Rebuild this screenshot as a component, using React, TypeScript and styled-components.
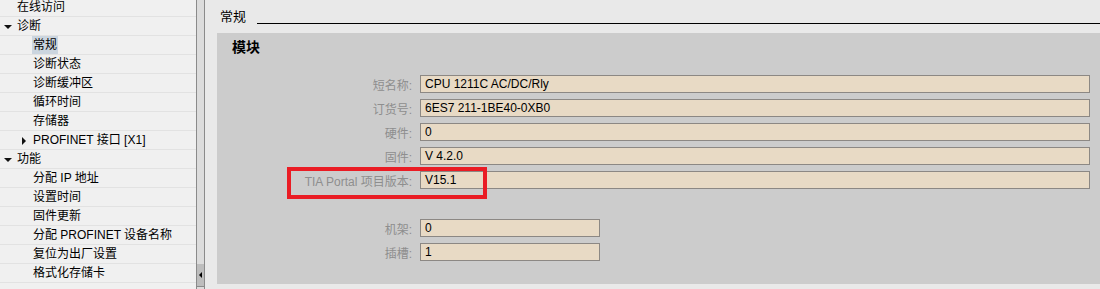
import React, { FC } from 'react';
import styled, { createGlobalStyle } from 'styled-components';

const GlobalStyle = createGlobalStyle`
  html, body {
    margin: 0;
    padding: 0;
    background: #e9e9e9;
  }
  body {
    font-family: "Liberation Sans", "Noto Sans CJK SC", sans-serif;
    font-size: 12px;
    color: #000;
  }
`;

type TreeItem = {
  label: string;
  level: number;
  arrow?: 'open' | 'closed';
  selected?: boolean;
};

const treeItems: TreeItem[] = [
  { label: '在线访问', level: 0 },
  { label: '诊断', level: 0, arrow: 'open' },
  { label: '常规', level: 1, selected: true },
  { label: '诊断状态', level: 1 },
  { label: '诊断缓冲区', level: 1 },
  { label: '循环时间', level: 1 },
  { label: '存储器', level: 1 },
  { label: 'PROFINET 接口 [X1]', level: 1, arrow: 'closed' },
  { label: '功能', level: 0, arrow: 'open' },
  { label: '分配 IP 地址', level: 1 },
  { label: '设置时间', level: 1 },
  { label: '固件更新', level: 1 },
  { label: '分配 PROFINET 设备名称', level: 1 },
  { label: '复位为出厂设置', level: 1 },
  { label: '格式化存储卡', level: 1 },
];

const mainFields = [
  { label: '短名称:', value: 'CPU 1211C AC/DC/Rly' },
  { label: '订货号:', value: '6ES7 211-1BE40-0XB0' },
  { label: '硬件:', value: '0' },
  { label: '固件:', value: 'V 4.2.0' },
  { label: 'TIA Portal 项目版本:', value: 'V15.1', marked: true },
];

const slotFields = [
  { label: '机架:', value: '0' },
  { label: '插槽:', value: '1' },
];

const App: FC = () => {
  return (
    <>
      <GlobalStyle />
      <Screen>
        <Tree>
          {treeItems.map(item => (
            <TreeRow key={item.label} level={item.level}>
              <ArrowSlot>
                {item.arrow === 'open' && <ArrowDown />}
                {item.arrow === 'closed' && <ArrowRight />}
              </ArrowSlot>
              <TreeLabel selected={item.selected}>{item.label}</TreeLabel>
            </TreeRow>
          ))}
        </Tree>
        <Splitter>
          <SplitterThumb>
            <ThumbArrow />
          </SplitterThumb>
        </Splitter>
        <Content>
          <SectionHeader>
            <SectionTitle>常规</SectionTitle>
            <SectionRule />
          </SectionHeader>
          <Panel>
            <PanelTitle>模块</PanelTitle>
            <FieldGroup>
              {mainFields.map(f => (
                <FieldRow key={f.label}>
                  <FieldLabel>{f.label}</FieldLabel>
                  <FieldInput>{f.value}</FieldInput>
                  {f.marked && <Marker />}
                </FieldRow>
              ))}
            </FieldGroup>
            <FieldGroup spaced>
              {slotFields.map(f => (
                <FieldRow key={f.label} short>
                  <FieldLabel>{f.label}</FieldLabel>
                  <FieldInput>{f.value}</FieldInput>
                </FieldRow>
              ))}
            </FieldGroup>
          </Panel>
        </Content>
      </Screen>
    </>
  );
};

export default App;

const Screen = styled.div`
  display: flex;
  width: 1100px;
  height: 289px;
  overflow: hidden;
`;

const Tree = styled.div`
  width: 196px;
  flex-shrink: 0;
  background: #f0f0f0;
  margin-top: -2px;
`;

const TreeRow = styled.div<{ level: number }>`
  display: flex;
  align-items: center;
  height: 18px;
  border-bottom: 1px solid #e2e2e2;
  padding-left: ${p => (p.level === 0 ? 2 : 18)}px;
`;

const ArrowSlot = styled.div`
  width: 12px;
  height: 18px;
  margin-right: 2px;
  display: flex;
  align-items: center;
  justify-content: center;
`;

const ArrowDown = styled.div`
  width: 0;
  height: 0;
  margin-top: 1px;
  border-left: 4px solid transparent;
  border-right: 4px solid transparent;
  border-top: 4px solid #111;
`;

const ArrowRight = styled.div`
  width: 0;
  height: 0;
  margin-top: 1px;
  border-top: 4px solid transparent;
  border-bottom: 4px solid transparent;
  border-left: 4px solid #111;
`;

const TreeLabel = styled.span<{ selected?: boolean }>`
  line-height: 17px;
  padding: 1px 1px 0;
  white-space: nowrap;
  background: ${p => (p.selected ? '#cbd5df' : 'transparent')};
`;

const Splitter = styled.div`
  width: 7px;
  flex-shrink: 0;
  background: #dcdcdc;
  border-left: 1px solid #8a8a8a;
  border-right: 1px solid #8a8a8a;
  display: flex;
  flex-direction: column;
  justify-content: flex-end;
  padding-bottom: 2px;
`;

const SplitterThumb = styled.div`
  height: 22px;
  background: #bdbdbd;
  border-bottom: 1px solid #8a8a8a;
  display: flex;
  align-items: center;
  padding-left: 2px;
`;

const ThumbArrow = styled.div`
  width: 0;
  height: 0;
  border-top: 3px solid transparent;
  border-bottom: 3px solid transparent;
  border-right: 3px solid #000;
`;

const Content = styled.div`
  flex: 1;
  background: #e9e9e9;
  display: flex;
  flex-direction: column;
`;

const SectionHeader = styled.div`
  display: flex;
  align-items: flex-start;
  height: 24px;
  padding-top: 9px;
  padding-left: 15px;
`;

const SectionTitle = styled.span`
  font-size: 13px;
  line-height: 16px;
`;

const SectionRule = styled.div`
  flex: 1;
  height: 1px;
  background: #000;
  margin-top: 14px;
  margin-left: 11px;
`;

const Panel = styled.div`
  margin-left: 12px;
  height: 251px;
  background: #cccccc;
  padding-top: 5px;
  box-sizing: border-box;
`;

const PanelTitle = styled.div`
  font-size: 14px;
  font-weight: bold;
  line-height: 18px;
  padding-left: 15px;
  margin-bottom: 19px;
`;

const FieldGroup = styled.div<{ spaced?: boolean }>`
  display: flex;
  flex-direction: column;
  gap: 6px;
  margin-top: ${p => (p.spaced ? 30 : 0)}px;
`;

const FieldRow = styled.div<{ short?: boolean }>`
  position: relative;
  display: grid;
  grid-template-columns: 195px ${p => (p.short ? '180px' : '1fr')};
  column-gap: 8px;
  padding-right: 10px;
  align-items: center;
`;

const FieldLabel = styled.span`
  text-align: right;
  color: #8e8e8e;
  white-space: nowrap;
`;

const FieldInput = styled.div`
  height: 18px;
  box-sizing: border-box;
  border: 1px solid #8c8884;
  background: #e8dac5;
  padding-left: 4px;
  line-height: 16px;
  white-space: nowrap;
`;

const Marker = styled.div`
  position: absolute;
  left: 70px;
  top: -4px;
  width: 200px;
  height: 32px;
  box-sizing: border-box;
  border: 4px solid #ea1c24;
`;
